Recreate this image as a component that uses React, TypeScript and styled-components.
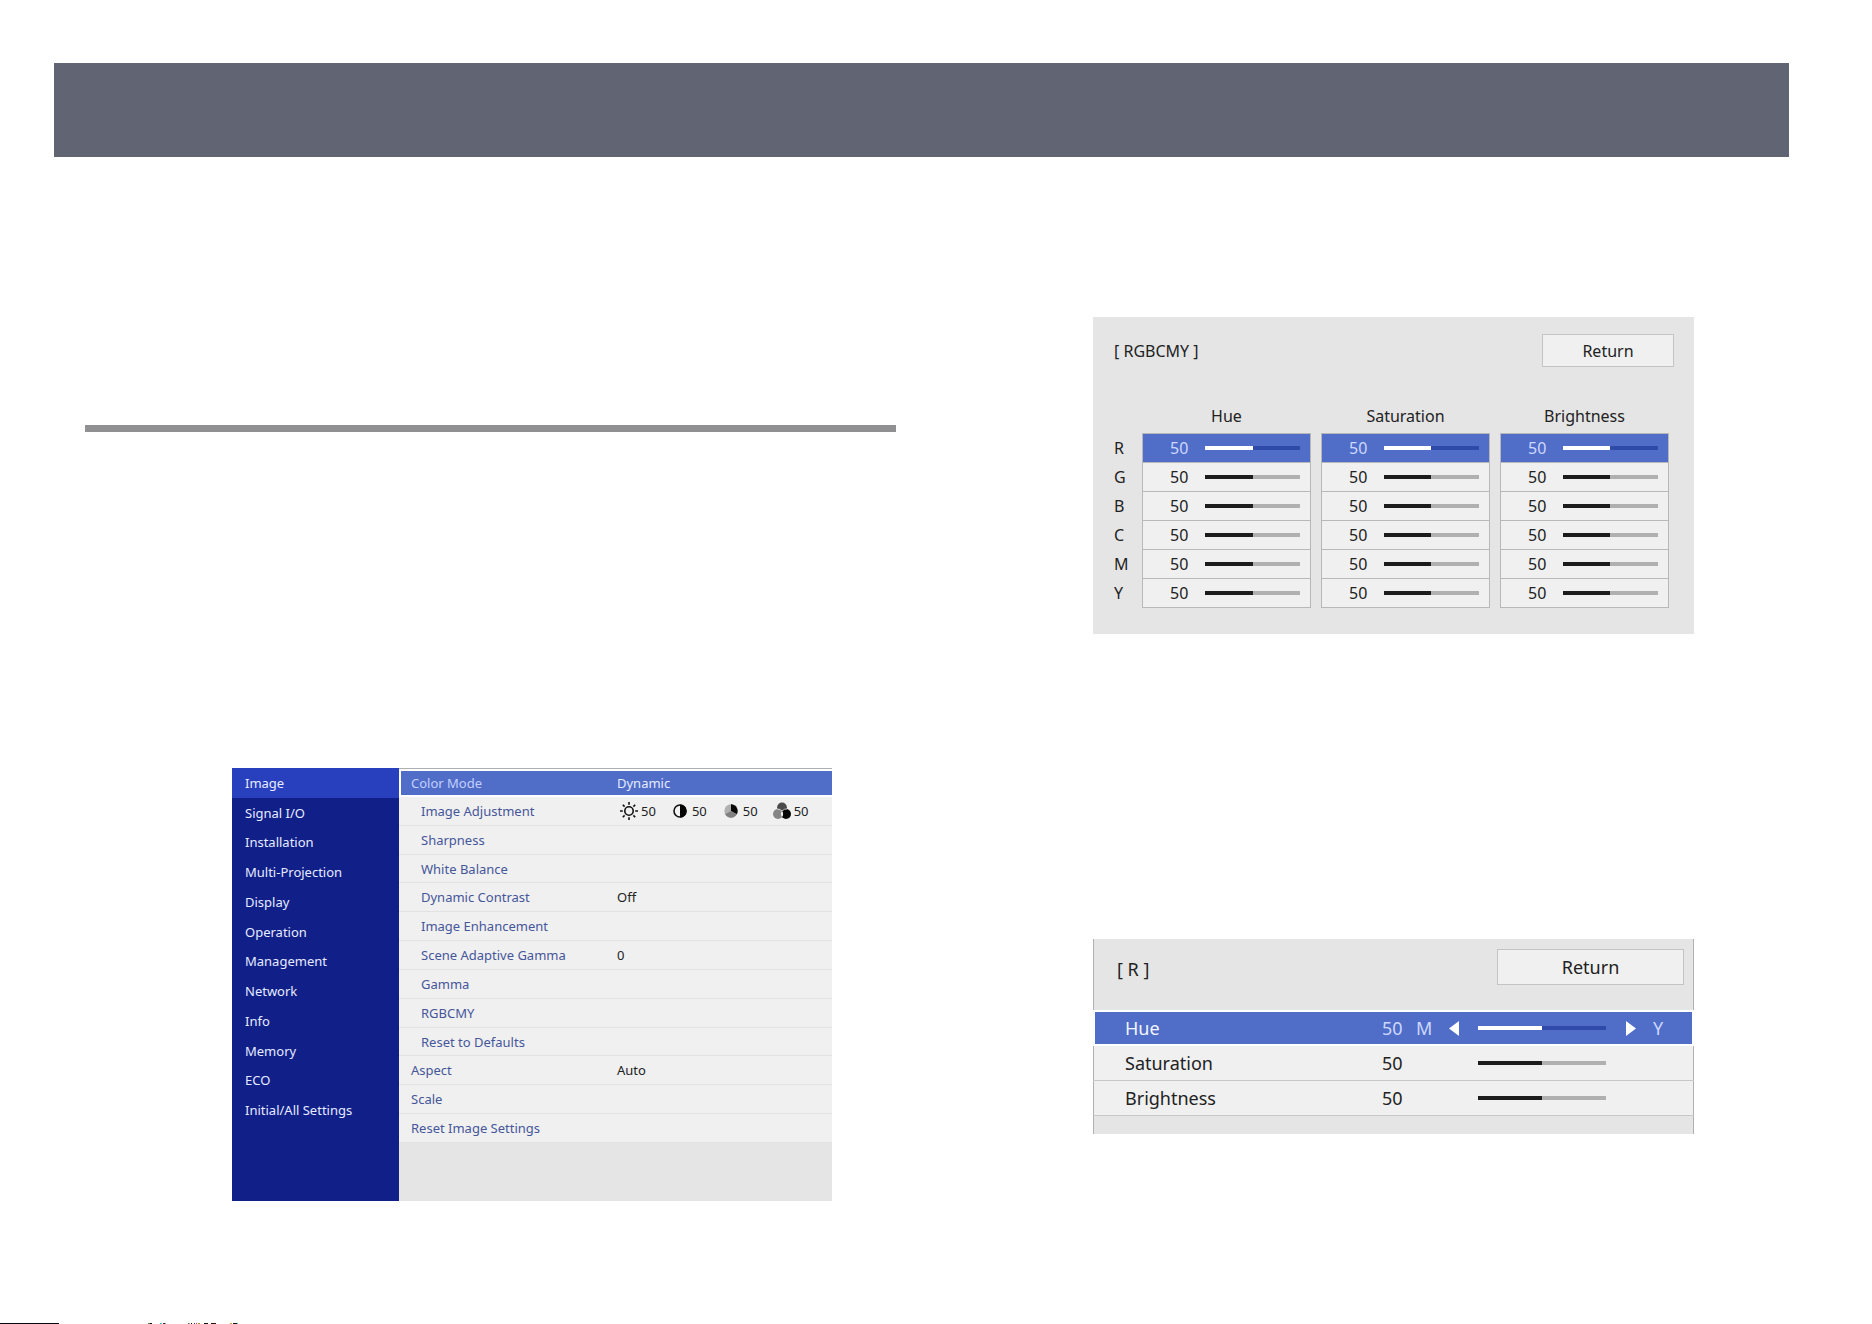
import React, { useState } from "react";
import styled, { createGlobalStyle, css } from "styled-components";

const GlobalStyle = createGlobalStyle`
  * { box-sizing: border-box; }
  body { margin: 0; background: #fff; font-family: "Noto Sans", "Open Sans", sans-serif; color: #222; }
  button { font: inherit; color: inherit; cursor: pointer; }
`;

const Page = styled.div`
  min-height: 100vh;
  display: flex;
  flex-direction: column;
`;

const Banner = styled.header`
  height: 94px;
  margin: 63px 83px 0 54px;
  background: #616573;
`;

const Columns = styled.main`
  display: grid;
  grid-template-columns: 811fr 601fr;
  column-gap: 197px;
  align-items: start;
  padding: 160px 178px 0 85px;
`;

const LeftColumn = styled.section`
  padding-top: 108px;
`;

const RightColumn = styled.section`
  display: grid;
  row-gap: 305px;
`;

const Rule = styled.hr`
  height: 7px;
  margin: 0 0 336px;
  border: 0;
  background: #909092;
`;

/* Projector menu */

const Menu = styled.div`
  display: grid;
  grid-template-columns: 167px 1fr;
  height: 433px;
  margin: 0 64px 0 147px;
  font-size: 13px;
  line-height: 18px;
`;

const Sidebar = styled.nav`
  display: flex;
  flex-direction: column;
  padding-bottom: 76px;
  background: #111f89;
`;

const SideItem = styled.button<{ $active: boolean }>`
  flex: 1;
  padding: 0 13px;
  border: 0;
  text-align: left;
  color: #e6ebff;
  background: ${(p) => (p.$active ? "#2840be" : "transparent")};
`;

const Settings = styled.div`
  display: flex;
  flex-direction: column;
  padding-bottom: 58px;
  border-top: 1px solid #b0b0b0;
  background: #e5e5e5;
`;

const settingGrid = css`
  display: grid;
  grid-template-columns: 206px 1fr;
  align-items: center;
  border: 0;
  text-align: left;
`;

const SelectedSetting = styled.button`
  ${settingGrid}
  height: 28px;
  padding: 0 0 0 10px;
  border: solid #fff;
  border-width: 2px 0 2px 2px;
  color: #e6ebff;
  background: #506dc8;
`;

const SettingRow = styled.button`
  ${settingGrid}
  flex: 1;
  padding: 0 0 0 12px;
  border-bottom: 1px solid #e2e2e2;
  background: #f0f0f0;
`;

const SettingName = styled.span<{ $nested?: boolean; $selected?: boolean }>`
  padding-left: ${(p) => (p.$nested ? 10 : 0)}px;
  color: ${(p) => (p.$selected ? "#c3cfff" : "#45569a")};
`;

const Levels = styled.span`
  display: flex;
  gap: 15px;
  padding-left: 3px;
`;

const Level = styled.span`
  display: flex;
  align-items: center;
  gap: 3px;
`;

/* Dialogs */

const ReturnButton = styled.button<{ $wide?: boolean }>`
  width: ${(p) => (p.$wide ? 187 : 132)}px;
  height: ${(p) => (p.$wide ? 36 : 33)}px;
  padding: 0;
  border: 1px solid #c4c4c4;
  background: #f0f0f0;
`;

const Title = styled.h2`
  margin: 0;
  font: inherit;
`;

const Range = styled.input<{ $selected: boolean; $fill: number }>`
  appearance: none;
  display: block;
  width: 100%;
  height: 4px;
  margin: 0;
  background: ${(p) => {
    const [on, off] = p.$selected ? ["#fff", "#2f4aa8"] : ["#1c1c1c", "#b0b0b0"];
    return `linear-gradient(to right, ${on} ${p.$fill}%, ${off} ${p.$fill}%)`;
  }};
  &::-webkit-slider-thumb { appearance: none; width: 1px; height: 4px; background: transparent; }
`;

const ColorDialog = styled.section`
  padding: 17px 20px 26px 21px;
  background: #e5e5e5;
  font-size: 16px;
  line-height: 22px;
`;

const ColorHeader = styled.div`
  display: flex;
  align-items: center;
  justify-content: space-between;
`;

const ColorTable = styled.table`
  width: calc(100% + 5px);
  margin-top: 31px;
  table-layout: fixed;
  border-collapse: separate;
  border-spacing: 0;
`;

const CornerHead = styled.th`
  width: 28px;
  padding: 0;
`;

const ColumnHead = styled.th`
  height: 35px;
  padding: 0 10px 0 0;
  font-weight: 400;
`;

const RowHead = styled.th`
  padding: 0;
  font-weight: 400;
  text-align: left;
`;

const ColorCell = styled.td`
  height: 29px;
  padding: 0 10px 0 0;
`;

const ColorValue = styled.label<{ $selected: boolean }>`
  display: grid;
  grid-template-columns: 35px 1fr;
  align-items: center;
  height: 29px;
  padding: 0 10px 0 27px;
  border: solid #b8b8b8;
  border-width: 1px 1px 0;
  color: ${(p) => (p.$selected ? "#cdd8ff" : "#222")};
  background: ${(p) => (p.$selected ? "#506dc8" : "#f0f0f0")};
  tr:last-child & { height: 30px; border-bottom-width: 1px; }
`;

const AxisDialog = styled.section`
  padding-bottom: 18px;
  background: #e5e5e5;
  box-shadow: inset 1px 0 #b0b0b0, inset -1px 0 #b0b0b0;
  font-size: 18px;
  line-height: 24px;
`;

const AxisHeader = styled.div`
  display: flex;
  justify-content: space-between;
  height: 71px;
  padding: 10px 10px 0 24px;

  ${Title} { padding-top: 8px; }
`;

const AxisRow = styled.label<{ $selected: boolean }>`
  display: grid;
  grid-template-columns: 1fr 34px 33px 29px 128px 20px 27px 41px;
  align-items: center;
  height: ${(p) => (p.$selected ? 36 : 35)}px;
  padding-left: 32px;
  ${(p) =>
    p.$selected
      ? css`
          color: #f2f5ff;
          background: #506dc8;
          box-shadow: inset 0 0 0 2px #fff;
        `
      : css`
          background: #f0f0f0;
          border-bottom: 1px solid #c8c8c8;
          box-shadow: inset 1px 0 #b0b0b0, inset -1px 0 #b0b0b0;
        `}
`;

const Reading = styled.span<{ $selected: boolean }>`
  color: ${(p) => (p.$selected ? "#cdd8ff" : "inherit")};
`;

const StepButton = styled.button`
  grid-column: ${(p) => (p["aria-label"] === "Decrease" ? 4 : 7)};
  display: flex;
  padding: 0;
  border: 0;
  background: none;
`;

const Track = styled.span`
  grid-column: 5;
`;

const EndLetter = styled.span`
  grid-column: 8;
  color: #cdd8ff;
`;

const marks: [number, number, string][] = [
  [0, 59, "#0a0610"],
  [148, 2, "#5a7d48"],
  [150, 2, "#111"],
  [160, 2, "#3cc"],
  [163, 2, "#711"],
  [165, 1, "#3cc"],
  [188, 1, "#e33"],
  [189, 1, "#3cc"],
  [191, 1, "#111"],
  [194, 1, "#33a"],
  [196, 1, "#e33"],
  [198, 2, "#a93"],
  [204, 4, "#111"],
  [211, 5, "#311"],
  [230, 2, "#ca4"],
  [233, 4, "#211"],
  [237, 1, "#3cc"],
];

const Edge = styled.footer`
  height: 1px;
  margin-top: auto;
  background: ${marks
    .map(([x, w, c]) => `linear-gradient(${c}, ${c}) ${x}px 0 / ${w}px 1px no-repeat`)
    .join(", ")};
`;

const SunIcon = () => (
  <svg width="18" height="18" viewBox="0 0 18 18" fill="none" stroke="#111" strokeWidth="1.6" aria-hidden="true">
    <circle cx="9" cy="9" r="4.2" />
    <path d="M9 0v2.8M9 15.2V18M0 9h2.8M15.2 9H18M2.8 2.8l1.8 1.8M13.4 13.4l1.8 1.8M2.8 15.2l1.8-1.8M13.4 4.6l1.8-1.8" />
  </svg>
);

const ContrastIcon = () => (
  <svg width="18" height="18" viewBox="0 0 18 18" aria-hidden="true">
    <circle cx="9" cy="9" r="6" fill="#f4f4f4" stroke="#111" strokeWidth="1.6" />
    <path d="M9 2.4a6.6 6.6 0 0 1 0 13.2z" fill="#050505" />
  </svg>
);

const SaturationIcon = () => (
  <svg width="18" height="18" viewBox="0 0 18 18" aria-hidden="true">
    <circle cx="9" cy="9" r="6.7" fill="#b0b0b0" />
    <path d="M9 9V2.3A6.7 6.7 0 0 1 14.8 12.3z" fill="#080808" />
    <path d="M9 9l5.8 3.3A6.7 6.7 0 0 1 3.2 12.3z" fill="#808080" />
  </svg>
);

const TintIcon = () => (
  <svg width="18" height="18" viewBox="0 0 18 18" aria-hidden="true">
    <circle cx="9" cy="5.4" r="4.9" fill="#4a4a4a" />
    <circle cx="13" cy="12" r="5" fill="#050505" />
    <circle cx="5" cy="12" r="5" fill="#858585" />
    <path d="M9 9a5 5 0 0 1 0 6 5 5 0 0 1 0-6z" fill="#f0f0f0" />
    <path d="M4.2 7.1Q6.5 6.6 9 9q2.5-2.4 4.8-1.9" fill="none" stroke="#f0f0f0" strokeWidth="0.8" />
  </svg>
);

const Arrow = ({ left }: { left?: boolean }) => (
  <svg width="10" height="15" viewBox="0 0 10 15" fill="#fff" aria-hidden="true">
    <path d={left ? "M10 0v15L0 7.5z" : "M0 0v15l10-7.5z"} />
  </svg>
);

const sections = [
  "Image", "Signal I/O", "Installation", "Multi-Projection", "Display", "Operation",
  "Management", "Network", "Info", "Memory", "ECO", "Initial/All Settings",
];

const levelIcons = [SunIcon, ContrastIcon, SaturationIcon, TintIcon];

const settings: { name: string; nested?: boolean; value?: React.ReactNode }[] = [
  {
    name: "Image Adjustment",
    nested: true,
    value: (
      <Levels>
        {levelIcons.map((Icon, i) => (
          <Level key={i}>
            <Icon />
            50
          </Level>
        ))}
      </Levels>
    ),
  },
  { name: "Sharpness", nested: true },
  { name: "White Balance", nested: true },
  { name: "Dynamic Contrast", nested: true, value: "Off" },
  { name: "Image Enhancement", nested: true },
  { name: "Scene Adaptive Gamma", nested: true, value: "0" },
  { name: "Gamma", nested: true },
  { name: "RGBCMY", nested: true },
  { name: "Reset to Defaults", nested: true },
  { name: "Aspect", value: "Auto" },
  { name: "Scale" },
  { name: "Reset Image Settings" },
];

const axes = ["Hue", "Saturation", "Brightness"];
const colors = ["R", "G", "B", "C", "M", "Y"];

function ColorSlider({ name, selected }: { name: string; selected: boolean }) {
  const [value, setValue] = useState(50);
  return (
    <ColorValue $selected={selected}>
      <span>{value}</span>
      <Range
        type="range"
        aria-label={name}
        $selected={selected}
        $fill={value}
        value={value}
        onChange={(e) => setValue(Number(e.target.value))}
      />
    </ColorValue>
  );
}

function AxisSlider({ name, selected }: { name: string; selected: boolean }) {
  const [value, setValue] = useState(50);
  return (
    <AxisRow $selected={selected} htmlFor={`axis-${name}`}>
      <span>{name}</span>
      <Reading $selected={selected}>{value}</Reading>
      {selected && (
        <>
          <Reading $selected>M</Reading>
          <StepButton type="button" aria-label="Decrease" onClick={() => setValue(Math.max(0, value - 1))}>
            <Arrow left />
          </StepButton>
        </>
      )}
      <Track>
        <Range
          id={`axis-${name}`}
          type="range"
          $selected={selected}
          $fill={value}
          value={value}
          onChange={(e) => setValue(Number(e.target.value))}
        />
      </Track>
      {selected && (
        <>
          <StepButton type="button" aria-label="Increase" onClick={() => setValue(Math.min(100, value + 1))}>
            <Arrow />
          </StepButton>
          <EndLetter>Y</EndLetter>
        </>
      )}
    </AxisRow>
  );
}

export default function App() {
  const [section, setSection] = useState("Image");
  return (
    <Page>
      <GlobalStyle />
      <Banner />
      <Columns>
        <LeftColumn>
          <Rule />
          <Menu>
            <Sidebar>
              {sections.map((name) => (
                <SideItem key={name} type="button" $active={name === section} onClick={() => setSection(name)}>
                  {name}
                </SideItem>
              ))}
            </Sidebar>
            <Settings>
              <SelectedSetting type="button">
                <SettingName $selected>Color Mode</SettingName>
                <span>Dynamic</span>
              </SelectedSetting>
              {settings.map(({ name, nested, value }) => (
                <SettingRow key={name} type="button">
                  <SettingName $nested={nested}>{name}</SettingName>
                  <span>{value}</span>
                </SettingRow>
              ))}
            </Settings>
          </Menu>
        </LeftColumn>

        <RightColumn>
          <ColorDialog>
            <ColorHeader>
              <Title>[ RGBCMY ]</Title>
              <ReturnButton type="button">Return</ReturnButton>
            </ColorHeader>
            <ColorTable>
              <thead>
                <tr>
                  <CornerHead />
                  {axes.map((axis) => (
                    <ColumnHead key={axis} scope="col">{axis}</ColumnHead>
                  ))}
                </tr>
              </thead>
              <tbody>
                {colors.map((color) => (
                  <tr key={color}>
                    <RowHead scope="row">{color}</RowHead>
                    {axes.map((axis) => (
                      <ColorCell key={axis}>
                        <ColorSlider name={`${color} ${axis}`} selected={color === "R"} />
                      </ColorCell>
                    ))}
                  </tr>
                ))}
              </tbody>
            </ColorTable>
          </ColorDialog>

          <AxisDialog>
            <AxisHeader>
              <Title>[ R ]</Title>
              <ReturnButton type="button" $wide>Return</ReturnButton>
            </AxisHeader>
            {axes.map((axis) => (
              <AxisSlider key={axis} name={axis} selected={axis === "Hue"} />
            ))}
          </AxisDialog>
        </RightColumn>
      </Columns>
      <Edge />
    </Page>
  );
}
